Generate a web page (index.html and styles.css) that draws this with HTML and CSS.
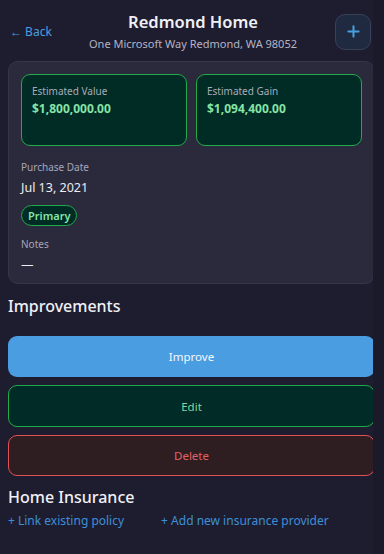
FILE: index.html
```html
<!DOCTYPE html>
<html lang="en">
<head>
<meta charset="utf-8">
<title>Redmond Home</title>
<link rel="stylesheet" href="styles.css">
</head>
<body>
<div class="viewport">
  <div class="content">
    <header class="header">
      <a class="back" href="#">← Back</a>
      <div class="title-block">
        <h1 class="title">Redmond Home</h1>
        <div class="subtitle">One Microsoft Way Redmond, WA 98052</div>
      </div>
      <button class="add-btn" aria-label="Add">
        <svg width="13" height="13" viewBox="0 0 14 14"><path d="M7 1.5v11M1.5 7h11" stroke="#4a9de0" stroke-width="2.2" stroke-linecap="round" fill="none"/></svg>
      </button>
    </header>

    <section class="card">
      <div class="stats">
        <div class="stat">
          <div class="stat-label">Estimated Value</div>
          <div class="stat-value">$1,800,000.00</div>
        </div>
        <div class="stat">
          <div class="stat-label">Estimated Gain</div>
          <div class="stat-value">$1,094,400.00</div>
        </div>
      </div>
      <div class="field">
        <div class="field-label">Purchase Date</div>
        <div class="field-value">Jul 13, 2021</div>
      </div>
      <span class="badge">Primary</span>
      <div class="field notes">
        <div class="field-label">Notes</div>
        <div class="field-value">—</div>
      </div>
    </section>

    <h2 class="section-title">Improvements</h2>
    <div class="actions">
      <button class="btn btn-primary">Improve</button>
      <button class="btn btn-edit">Edit</button>
      <button class="btn btn-delete">Delete</button>
    </div>

    <h2 class="section-title insurance">Home Insurance</h2>
    <div class="links">
      <a href="#" class="link">+ Link existing policy</a>
      <a href="#" class="link">+ Add new insurance provider</a>
    </div>
  </div>
</div>
</body>
</html>
```

FILE: styles.css
```css
* { box-sizing: border-box; }
html, body {
  margin: 0;
  padding: 0;
  background: #1b1a2b;
  font-family: "Noto Sans", "Open Sans", sans-serif;
  color: #e8e8f0;
}
.viewport {
  width: 373px;
  height: 554px;
  overflow: hidden;
  background: #1e1d30;
}
.content {
  width: 375px;
  padding: 12px 0 0 8px;
}
.header {
  display: flex;
  align-items: center;
  padding: 0 4px 0 2px;
}
.back {
  color: #4a9de0;
  text-decoration: none;
  font-size: 12px;
  width: 41px;
  white-space: nowrap;
}
.title-block {
  flex: 1;
  text-align: center;
}
.title {
  margin: 0;
  font-size: 16.5px;
  font-weight: 600;
  line-height: 20px;
  color: #f0f0f5;
}
.subtitle {
  font-size: 11px;
  line-height: 15px;
  margin-top: 4px;
  color: #b4b4c4;
}
.add-btn {
  width: 36px;
  height: 36px;
  border-radius: 10px;
  background: #1f2a40;
  border: 1px solid #3a4058;
  display: flex;
  align-items: center;
  justify-content: center;
  padding: 0;
}
.card {
  margin-top: 10px;
  background: #2b2a3d;
  border: 1px solid #363549;
  border-radius: 10px;
  padding: 12px 12px 10px 12px;
}
.stats {
  display: grid;
  grid-template-columns: 1fr 1fr;
  gap: 9px;
}
.stat {
  background: #012b25;
  border: 1px solid #22a94b;
  border-radius: 9px;
  height: 72px;
  padding: 9px 10px;
}
.stat-label {
  font-size: 10px;
  line-height: 14px;
  color: #a8acb8;
}
.stat-value {
  margin-top: 3px;
  font-size: 12px;
  font-weight: 700;
  line-height: 16px;
  color: #86e4a6;
}
.field { margin-top: 14px; }
.field-label {
  font-size: 10px;
  line-height: 14px;
  color: #a6a6b6;
}
.field-value {
  margin-top: 6px;
  font-size: 12.5px;
  line-height: 16px;
  color: #ececf2;
}
.badge {
  display: inline-block;
  margin-top: 9px;
  padding: 0 6px;
  height: 21px;
  line-height: 19px;
  font-size: 11px;
  font-weight: 600;
  color: #86e4a6;
  background: #012b25;
  border: 1px solid #22a94b;
  border-radius: 11px;
}
.field.notes { margin-top: 11px; }
.section-title {
  margin: 11px 0 0 0;
  font-size: 16px;
  font-weight: 500;
  line-height: 22px;
  color: #f0f0f5;
}
.actions {
  display: flex;
  flex-direction: column;
  gap: 8px;
  margin-top: 19px;
}
.btn {
  height: 41px;
  border-radius: 9px;
  font-family: inherit;
  font-size: 11.5px;
  width: 100%;
  padding: 0;
}
.btn-primary {
  background: #4a9de0;
  border: none;
  color: #f4f8ff;
}
.btn-edit {
  height: 42px;
  background: #002b26;
  border: 1px solid #22a94b;
  color: #84d6a0;
}
.btn-delete {
  background: #2e1e22;
  border: 1px solid #e05252;
  color: #e26262;
}
.section-title.insurance {
  margin-top: 10px;
}
.links {
  display: flex;
  gap: 37px;
  margin-top: 4px;
}
.link {
  color: #3d8fd6;
  text-decoration: none;
  font-size: 12px;
  line-height: 18px;
}
```
